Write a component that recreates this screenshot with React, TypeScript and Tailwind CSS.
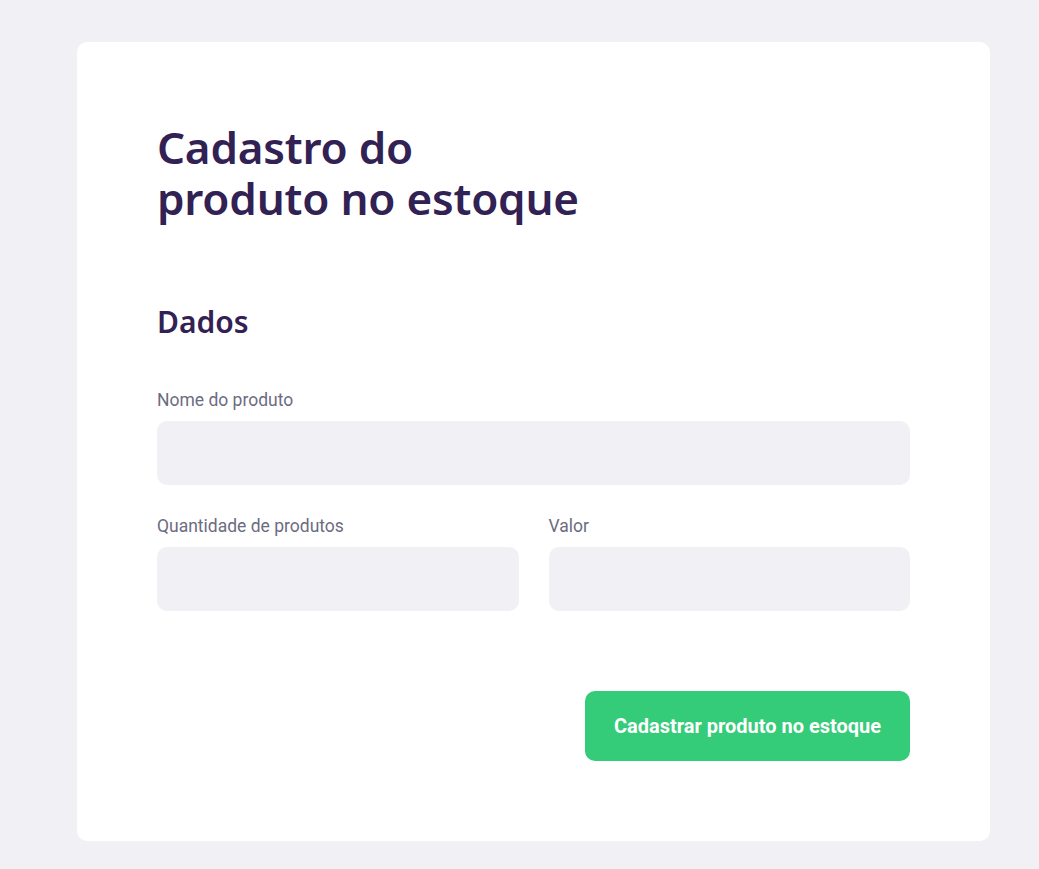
export default function App() {
  return (
    <div className="min-h-screen bg-[#F0F0F5] pt-[42px] pb-[28px] font-['Roboto',sans-serif]">
      <form className="ml-[77px] flex w-[913px] flex-col rounded-[10px] bg-white p-[80px]">
        <h1 className="font-['Noto_Sans',sans-serif] text-[44px] font-semibold leading-[51px] tracking-[-0.2px] text-[#322153]">
          Cadastro do
          <br />
          produto no estoque
        </h1>

        <fieldset className="mt-[81px] border-0">
          <legend className="mb-[50px] font-['Noto_Sans',sans-serif] text-[30px] font-semibold leading-[34px] text-[#322153]">
            Dados
          </legend>

          <div className="mb-[30px] flex flex-col">
            <label className="mb-[10px] text-[17.5px] leading-[22px] text-[#6C6C80]">Nome do produto</label>
            <input className="h-[64px] rounded-[10px] bg-[#F0F0F5] px-[30px] text-[20px] text-[#6C6C80] outline-none" />
          </div>

          <div className="flex gap-[30px]">
            <div className="mb-[30px] flex flex-1 flex-col">
              <label className="mb-[10px] text-[17.5px] leading-[22px] text-[#6C6C80]">Quantidade de produtos</label>
              <input className="h-[64px] rounded-[10px] bg-[#F0F0F5] px-[30px] text-[20px] text-[#6C6C80] outline-none" />
            </div>
            <div className="mb-[30px] flex flex-1 flex-col">
              <label className="mb-[10px] text-[17.5px] leading-[22px] text-[#6C6C80]">Valor</label>
              <input className="h-[64px] rounded-[10px] bg-[#F0F0F5] px-[30px] text-[20px] text-[#6C6C80] outline-none" />
            </div>
          </div>
        </fieldset>

        <button
          type="button"
          className="mt-[50px] h-[70px] w-[325px] self-end rounded-[10px] bg-[#34CB79] text-[20px] font-bold text-white"
        >
          Cadastrar produto no estoque
        </button>
      </form>
    </div>
  )
}
